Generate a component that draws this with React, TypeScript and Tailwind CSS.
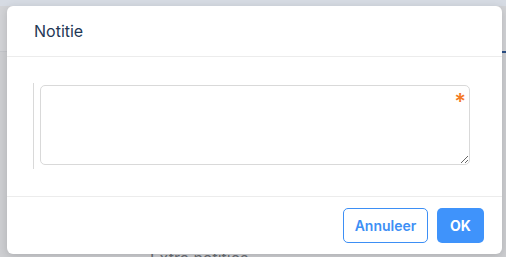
export default function App() {
  return (
    <div className="relative h-[257px] w-[506px] overflow-hidden bg-[#cdced1] font-['Inter','Noto_Sans',sans-serif]">
      {/* page behind the dimmed overlay */}
      <div className="flex h-full flex-col">
        <div className="h-[6px] shrink-0 bg-[#d6dbe3]" />
        <div className="h-[46px] shrink-0 border-b border-[#c4c6ca] bg-[#d2d3d6]" />
        <div className="shrink-0 pl-[150px] pt-[198px] text-[16px] leading-none text-[#6b6f75]">
          Extra notities
        </div>
      </div>
      <div className="absolute right-0 top-[51px] h-[2px] w-[4px] bg-[#2a4f86]" />

      {/* modal */}
      <div className="absolute left-[7px] top-[6px] flex h-[248px] w-[495px] flex-col rounded-[6px] bg-white shadow-[0_2px_8px_rgba(0,0,0,0.15)]">
        <div className="flex h-[51px] items-center border-b border-[#ececec] pl-[27px]">
          <h2 className="text-[16px] font-normal text-[#1f3856]">Notitie</h2>
        </div>
        <div className="flex-1 pl-[26px] pr-[32px] pt-[26px]">
          <div className="border-l border-[#d9d9d9] pb-[4px] pl-[6px] pt-[2px]">
            <div className="relative">
              <textarea className="block h-[80px] w-full resize-y rounded-[5px] border border-[#d9d9d9] px-2 py-1 text-sm outline-none" />
              <span className="pointer-events-none absolute right-[4px] top-[5px] text-[22px] font-semibold leading-none text-[#f47a25]">
                *
              </span>
            </div>
          </div>
        </div>
        <div className="flex h-[58px] items-center justify-end gap-[9px] border-t border-[#ececec] pr-[18px]">
          <button className="h-[35px] w-[85px] rounded-[5px] border border-[#3d8ff5] bg-white text-[14px] font-semibold text-[#3d8ff5]">
            Annuleer
          </button>
          <button className="h-[35px] w-[47px] rounded-[5px] bg-[#3f93fb] text-[14px] font-bold text-white">
            OK
          </button>
        </div>
      </div>
    </div>
  );
}
